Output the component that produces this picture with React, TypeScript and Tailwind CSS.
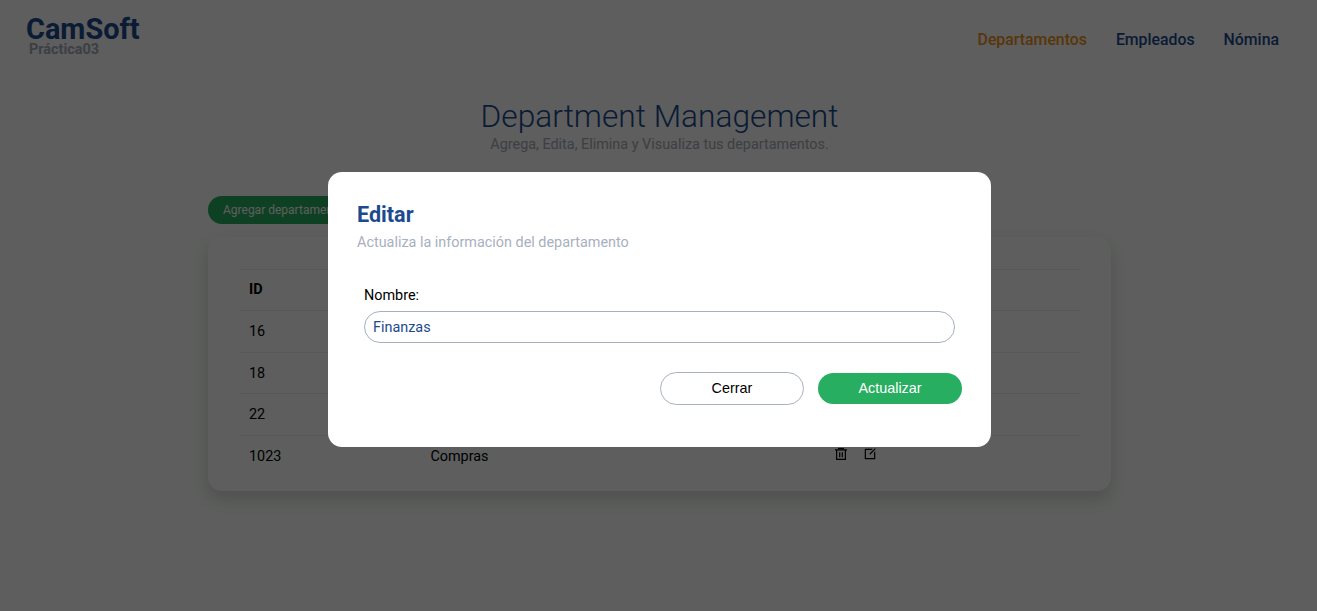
import { RiEditBoxLine } from "react-icons/ri";

const rows = [
  { id: "16", name: "Finanzas" },
  { id: "18", name: "Ventas" },
  { id: "22", name: "Sistemas" },
  { id: "1023", name: "Compras" },
];

function TrashIcon() {
  return (
    <svg width="14" height="14" viewBox="0 0 14 14" fill="none" stroke="currentColor">
      <path d="M4 1.5h6" strokeWidth="1.2" />
      <path d="M1 2.9h12" strokeWidth="1.3" />
      <path d="M2.6 3v9.4h8.8V3" strokeWidth="1.2" />
      <path d="M5.7 5.3v5M8.3 5.3v5" strokeWidth="1.2" />
    </svg>
  );
}

function Header() {
  return (
    <header className="flex h-[79px] items-start justify-between pl-[26px] pr-[38px]">
      <div className="pt-[15px] font-bold">
        <div className="text-[28.9px] leading-[29px] text-[#1b4a8f]">CamSoft</div>
        <div className="-mt-px pl-[3px] text-[14.4px] leading-[14px] text-[#a5abb8]">Práctica03</div>
      </div>
      <nav className="flex gap-[29px] pt-[30px] text-[15.84px] leading-[19px] font-medium text-[#1b4a8f]">
        <a className="text-[#f09020]">Departamentos</a>
        <a>Empleados</a>
        <a>Nómina</a>
      </nav>
    </header>
  );
}

function DepartmentTable() {
  return (
    <section className="h-[254px] rounded-[14px] bg-[#fbfffb] px-[32px] pt-[32px] shadow-[0_8px_16px_rgba(0,0,0,0.15)]">
      <div className="grid h-[41px] grid-cols-[181px_1fr_253px] border-t border-[#e9ebe9] pl-[9px] pt-[11px] leading-[17px] font-bold">
        <span>ID</span>
        <span>Nombre</span>
        <span>Acciones</span>
      </div>
      {rows.map((row) => (
        <div key={row.id} className="grid h-[41.7px] grid-cols-[181px_1fr_253px] border-t border-[#e9ebe9] pl-[9px] pt-[12px] leading-[17px]">
          <span>{row.id}</span>
          <span className="pl-[0.4px]">{row.name}</span>
          <span className="-mt-px flex gap-[15px] pl-[8px]">
            <TrashIcon />
            <RiEditBoxLine size={14} />
          </span>
        </div>
      ))}
    </section>
  );
}

function EditModal() {
  return (
    <div className="fixed inset-0 flex items-start justify-center bg-black/63 pt-[172px]">
      <div className="ml-[2px] h-[275px] w-[663px] rounded-[14px] bg-white px-[29px] pt-[30px]">
        <h2 className="text-[21.6px] leading-[26px] font-bold text-[#1b4a8f]">Editar</h2>
        <p className="mt-[6px] text-[14.4px] leading-[17px] text-[#a8b0c0]">Actualiza la información del departamento</p>
        <div className="mt-[36px] px-[7px]">
          <label className="block leading-[17px]">Nombre:</label>
          <input
            className="mt-[7px] block h-[32px] w-full rounded-full border border-[#a8b0c0] px-[8px] text-[14.4px] text-[#1b4a8f] outline-none"
            defaultValue="Finanzas"
          />
        </div>
        <div className="mt-[29px] flex items-center justify-end gap-[14px] font-['Liberation_Sans',sans-serif] text-[14.4px]">
          <button className="h-[33px] w-[144px] rounded-full border border-[#a8b0c0] pt-px">Cerrar</button>
          <button className="h-[31px] w-[144px] rounded-full bg-[#27ae60] pt-px text-white">Actualizar</button>
        </div>
      </div>
    </div>
  );
}

export default function App() {
  return (
    <div className="h-[611px] overflow-hidden bg-[#fbfffb] font-['Roboto',sans-serif] text-[14.4px] text-black">
      <Header />
      <main className="mx-auto w-[903px] translate-x-px pt-[19px]">
        <div className="text-center">
          <h1 className="text-[31.68px] leading-[38px] font-light text-[#1b4a8f]">Department Management</h1>
          <p className="text-[14.4px] leading-[17px] text-[#a5abb8]">Agrega, Edita, Elimina y Visualiza tus departamentos.</p>
        </div>
        <button className="mt-[43px] mb-[13px] flex h-[28px] items-center rounded-full bg-[#27ae60] px-[15px] text-[12px] text-white">
          Agregar departamento
        </button>
        <DepartmentTable />
      </main>
      <EditModal />
    </div>
  );
}
